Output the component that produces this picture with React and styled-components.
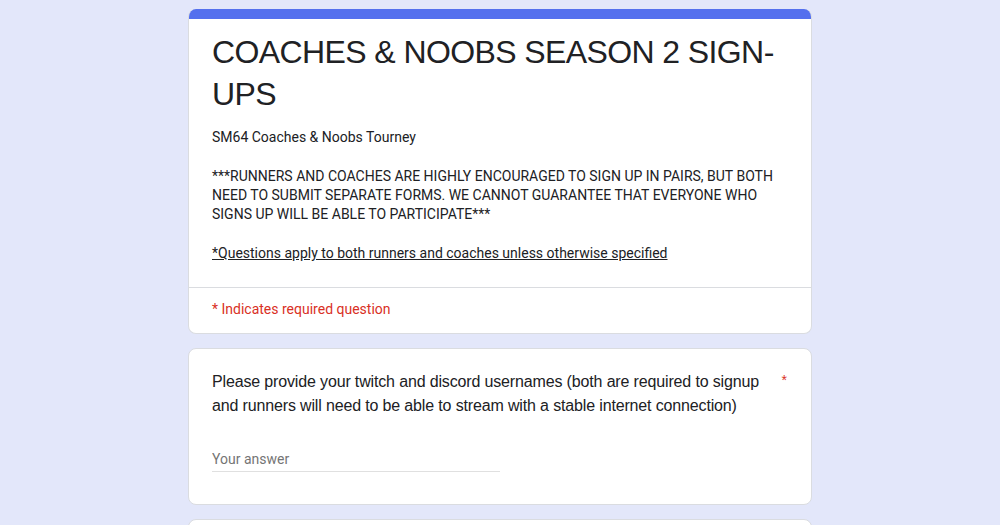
import React from 'react'
import styled, { createGlobalStyle } from 'styled-components'

const GlobalStyle = createGlobalStyle`
   html, body {
      margin: 0;
      padding: 0;
      background-color: #e3e7fa;
   }
   * {
      box-sizing: border-box;
   }
`

const Page = styled.div`
   display: flex;
   flex-direction: column;
   align-items: center;
   gap: 14px;
   padding-top: 9px;
   min-height: 100vh;
`

const Card = styled.div`
   width: 624px;
   background-color: #ffffff;
   border: 1px solid #dadce0;
   border-radius: 8px;
   overflow: hidden;
   min-height: ${({ minHeight }) => minHeight || 'auto'};
`

const HeaderCard = styled(Card)`
   border-top: none;
`

const AccentBar = styled.div`
   height: 10px;
   background-color: #5470ee;
`

const HeaderBody = styled.div`
   padding: 12px 24px 24px 23px;
`

const Title = styled.h1`
   margin: 0;
   font-family: 'Liberation Sans', Arial, sans-serif;
   font-size: 32px;
   font-weight: 400;
   line-height: 42px;
   letter-spacing: -0.6px;
   color: #202124;
`

const Description = styled.div`
   margin-top: 13px;
   font-family: Roboto, 'Noto Sans', sans-serif;
   font-size: 14px;
   line-height: 19.33px;
   color: #202124;
`

const Paragraph = styled.p`
   margin: 0;
   min-height: 19.33px;
   text-decoration: ${({ underline }) => (underline ? 'underline' : 'none')};
`

const Divider = styled.div`
   height: 1px;
   background-color: #dadce0;
`

const RequiredNote = styled.div`
   padding: 11px 24px 14px 23px;
   font-family: Roboto, 'Noto Sans', sans-serif;
   font-size: 14px;
   line-height: 20px;
   color: #d93025;
`

const QuestionBody = styled.div`
   padding: 21px 24px 32px 23px;
`

const QuestionRow = styled.div`
   display: flex;
   align-items: flex-start;
`

const QuestionText = styled.div`
   flex: 1;
   font-family: 'Liberation Sans', Arial, sans-serif;
   font-size: 16px;
   line-height: 24px;
   letter-spacing: -0.15px;
   color: #202124;
`

const Asterisk = styled.span`
   width: 20px;
   text-align: right;
   font-family: 'Liberation Sans', Arial, sans-serif;
   font-size: 14px;
   line-height: 20px;
   color: #d93025;
`

const AnswerInput = styled.input`
   display: block;
   width: 288px;
   margin-top: 31px;
   padding: 0 0 2px 0;
   border: none;
   border-bottom: 1px solid #e0e0e0;
   outline: none;
   background: transparent;
   font-family: Roboto, 'Noto Sans', sans-serif;
   font-size: 14px;
   line-height: 20px;
   height: 23px;
   color: #202124;
   ::placeholder {
      color: #70757a;
   }
`

const App = () => {
   return (
      <>
         <GlobalStyle />
         <Page>
            <HeaderCard>
               <AccentBar />
               <HeaderBody>
                  <Title>COACHES &amp; NOOBS SEASON 2 SIGN-UPS</Title>
                  <Description>
                     <Paragraph>SM64 Coaches &amp; Noobs Tourney</Paragraph>
                     <Paragraph />
                     <Paragraph>
                        ***RUNNERS AND COACHES ARE HIGHLY ENCOURAGED TO SIGN UP IN PAIRS, BUT BOTH
                        NEED TO SUBMIT SEPARATE FORMS. WE CANNOT GUARANTEE THAT EVERYONE WHO SIGNS UP
                        WILL BE ABLE TO PARTICIPATE***
                     </Paragraph>
                     <Paragraph />
                     <Paragraph underline>
                        *Questions apply to both runners and coaches unless otherwise specified
                     </Paragraph>
                  </Description>
               </HeaderBody>
               <Divider />
               <RequiredNote>* Indicates required question</RequiredNote>
            </HeaderCard>

            <Card>
               <QuestionBody>
                  <QuestionRow>
                     <QuestionText>
                        Please provide your twitch and discord usernames (both are required to signup
                        and runners will need to be able to stream with a stable internet connection)
                     </QuestionText>
                     <Asterisk>*</Asterisk>
                  </QuestionRow>
                  <AnswerInput type="text" placeholder="Your answer" />
               </QuestionBody>
            </Card>

            <Card minHeight="120px" />
         </Page>
      </>
   )
}

export default App
